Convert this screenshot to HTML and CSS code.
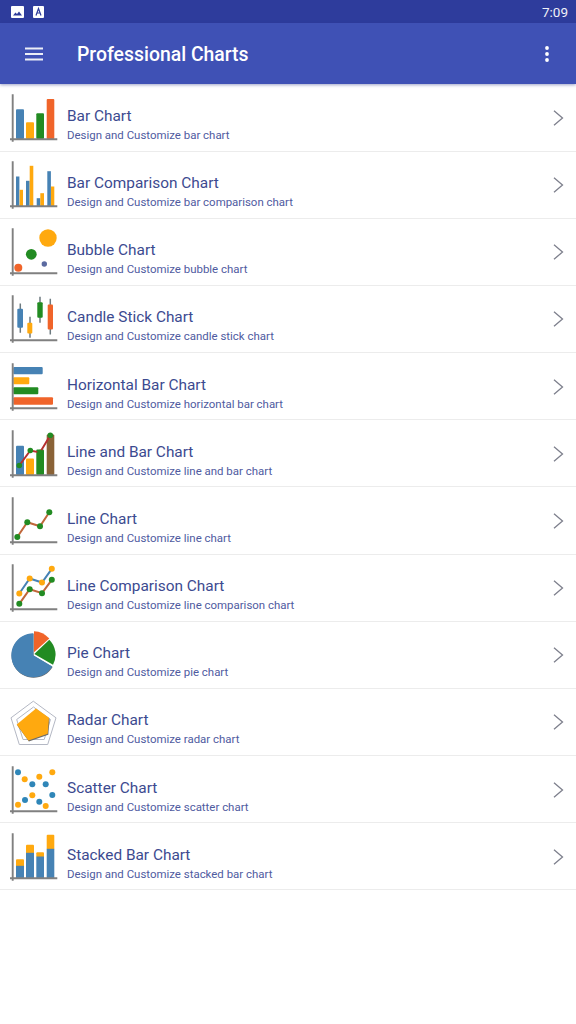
FILE: index.html
```html
<!DOCTYPE html>
<html>
<head>
    <title>Professional Charts</title>
    <link rel="stylesheet" href="styles.css">
</head>
<body>
    <!-- Shared chart axes and chevron -->
    <svg class="defs" width="0" height="0">
        <symbol id="axes" viewBox="0 0 52 56">
            <path d="M4.7 4.3V51.7M2 49.2H49.3" fill="none" stroke="#808080" stroke-width="1.9"/>
        </symbol>
    </svg>

    <!-- Status Bar -->
    <div class="status-bar">
        <div class="status-icons">
            <svg width="13" height="12" viewBox="0 0 13 12"><rect width="13" height="12" rx="1" fill="#fff"/><path d="M2 9.5L4.5 6.5 6 8 8 5.5 11 9.5Z" fill="#2e3c9b"/></svg>
            <svg width="11" height="12" viewBox="0 0 11 12"><rect width="11" height="12" rx="1" fill="#fff"/><path d="M3 9.5L5.5 2.5 8 9.5M4 7H7" fill="none" stroke="#2e3c9b" stroke-width="1.2"/></svg>
        </div>
        <span class="clock">7:09</span>
    </div>

    <!-- Toolbar -->
    <div class="toolbar">
        <svg class="menu-icon" width="18" height="14" viewBox="0 0 18 14"><path d="M0 1.5H18M0 7H18M0 12.5H18" stroke="#fff" stroke-width="1.8" opacity=".9"/></svg>
        <h1>Professional Charts</h1>
        <svg class="more-icon" width="4" height="16" viewBox="0 0 4 16"><circle cx="2" cy="2" r="1.9" fill="#fff"/><circle cx="2" cy="8" r="1.9" fill="#fff"/><circle cx="2" cy="14" r="1.9" fill="#fff"/></svg>
    </div>

    <!-- Chart List -->
    <div class="chart-list">
        <div class="chart-row">
            <svg class="chart-icon" viewBox="0 0 52 56">
                <rect class="blue" x="8" y="19.3" width="8" height="29.7" rx="1"/>
                <rect class="amber" x="18" y="32.3" width="8" height="16.7" rx="1"/>
                <rect class="green" x="28.3" y="23.3" width="7.7" height="25.7" rx="1"/>
                <rect class="red" x="38.7" y="9" width="7.6" height="40" rx="1"/>
                <use href="#axes"/>
            </svg>
            <div class="chart-text">
                <h3>Bar Chart</h3>
                <p>Design and Customize bar chart</p>
            </div>
            <svg class="chevron" width="11" height="16" viewBox="0 0 11 16"><path d="M1 .7L9.5 8 1 15.3" fill="none" stroke="#7d7f8c" stroke-width="1.3"/></svg>
        </div>

        <div class="chart-row">
            <svg class="chart-icon" viewBox="0 0 52 56">
                <rect class="blue" x="8" y="19.5" width="3.4" height="29.5"/>
                <rect class="amber" x="11.6" y="32.8" width="3.4" height="16.2"/>
                <rect class="blue" x="18" y="23.8" width="3.6" height="25.2"/>
                <rect class="amber" x="21.7" y="8.8" width="3.6" height="40.2"/>
                <rect class="blue" x="28.7" y="41.2" width="3.6" height="7.8"/>
                <rect class="amber" x="32.3" y="36.2" width="3.7" height="12.8"/>
                <rect class="blue" x="39.3" y="14.2" width="3.6" height="34.8"/>
                <rect class="amber" x="43" y="29.5" width="3.3" height="19.5"/>
                <use href="#axes"/>
            </svg>
            <div class="chart-text">
                <h3>Bar Comparison Chart</h3>
                <p>Design and Customize bar comparison chart</p>
            </div>
            <svg class="chevron" width="11" height="16" viewBox="0 0 11 16"><path d="M1 .7L9.5 8 1 15.3" fill="none" stroke="#7d7f8c" stroke-width="1.3"/></svg>
        </div>

        <div class="chart-row">
            <svg class="chart-icon" viewBox="0 0 52 56">
                <circle class="amber" cx="40" cy="14" r="8.7"/>
                <circle class="green" cx="23.3" cy="30.3" r="5.4"/>
                <circle class="red" cx="10.3" cy="43.7" r="4"/>
                <circle class="slate" cx="36.3" cy="40" r="2.7"/>
                <use href="#axes"/>
            </svg>
            <div class="chart-text">
                <h3>Bubble Chart</h3>
                <p>Design and Customize bubble chart</p>
            </div>
            <svg class="chevron" width="11" height="16" viewBox="0 0 11 16"><path d="M1 .7L9.5 8 1 15.3" fill="none" stroke="#7d7f8c" stroke-width="1.3"/></svg>
        </div>

        <div class="chart-row">
            <svg class="chart-icon" viewBox="0 0 52 56">
                <path class="wick" d="M12.3 12.5V41.8M22 25.8V46.8M32 5.8V31.8M42.3 7.8V43.5"/>
                <rect class="blue" x="9.3" y="17.8" width="5.7" height="19" rx="1"/>
                <rect class="amber" x="19.3" y="31.8" width="5" height="10.7" rx="1"/>
                <rect class="green" x="29.3" y="11.2" width="5.4" height="15.6" rx="1"/>
                <rect class="red" x="39.7" y="13.5" width="5.3" height="25" rx="1"/>
                <use href="#axes"/>
            </svg>
            <div class="chart-text">
                <h3>Candle Stick Chart</h3>
                <p>Design and Customize candle stick chart</p>
            </div>
            <svg class="chevron" width="11" height="16" viewBox="0 0 11 16"><path d="M1 .7L9.5 8 1 15.3" fill="none" stroke="#7d7f8c" stroke-width="1.3"/></svg>
        </div>

        <div class="chart-row">
            <svg class="chart-icon" viewBox="0 0 52 56">
                <rect class="blue" x="5.3" y="8" width="29.4" height="7.3" rx="1"/>
                <rect class="amber" x="5.3" y="18.3" width="16" height="7" rx="1"/>
                <rect class="green" x="5.3" y="28.3" width="25" height="7" rx="1"/>
                <rect class="red" x="5.3" y="38.3" width="39.7" height="7.4" rx="1"/>
                <use href="#axes"/>
            </svg>
            <div class="chart-text">
                <h3>Horizontal Bar Chart</h3>
                <p>Design and Customize horizontal bar chart</p>
            </div>
            <svg class="chevron" width="11" height="16" viewBox="0 0 11 16"><path d="M1 .7L9.5 8 1 15.3" fill="none" stroke="#7d7f8c" stroke-width="1.3"/></svg>
        </div>

        <div class="chart-row">
            <svg class="chart-icon" viewBox="0 0 52 56">
                <rect class="blue" x="8" y="19.8" width="8" height="29.2" rx="1"/>
                <rect class="amber" x="18" y="32.5" width="8" height="16.5" rx="1"/>
                <rect class="green" x="28.3" y="23.5" width="7.7" height="25.5" rx="1"/>
                <rect class="brown" x="38.7" y="8.5" width="7.6" height="40.5" rx="1"/>
                <path class="line-dark" d="M11.3 39.5L22.3 24.5 32 26.5 42.3 9.2"/>
                <g class="green">
                    <circle cx="11.3" cy="39.5" r="2.8"/><circle cx="22.3" cy="24.5" r="2.8"/>
                    <circle cx="32" cy="26.5" r="2.8"/><circle cx="42.3" cy="9.2" r="2.8"/>
                </g>
                <use href="#axes"/>
            </svg>
            <div class="chart-text">
                <h3>Line and Bar Chart</h3>
                <p>Design and Customize line and bar chart</p>
            </div>
            <svg class="chevron" width="11" height="16" viewBox="0 0 11 16"><path d="M1 .7L9.5 8 1 15.3" fill="none" stroke="#7d7f8c" stroke-width="1.3"/></svg>
        </div>

        <div class="chart-row">
            <svg class="chart-icon" viewBox="0 0 52 56">
                <path class="line-red" d="M9.3 44L19.3 29.3 32 33.3 41.3 19.3"/>
                <g class="green">
                    <circle cx="9.3" cy="44" r="3"/><circle cx="19.3" cy="29.3" r="3"/>
                    <circle cx="32" cy="33.3" r="3"/><circle cx="41.3" cy="19.3" r="3"/>
                </g>
                <use href="#axes"/>
            </svg>
            <div class="chart-text">
                <h3>Line Chart</h3>
                <p>Design and Customize line chart</p>
            </div>
            <svg class="chevron" width="11" height="16" viewBox="0 0 11 16"><path d="M1 .7L9.5 8 1 15.3" fill="none" stroke="#7d7f8c" stroke-width="1.3"/></svg>
        </div>

        <div class="chart-row">
            <svg class="chart-icon" viewBox="0 0 52 56">
                <path class="line-blue" d="M11.3 33.5L21.7 18.5 34 22.5 43.8 8.8"/>
                <g class="amber">
                    <circle cx="11.3" cy="33.5" r="3"/><circle cx="21.7" cy="18.5" r="3"/>
                    <circle cx="34" cy="22.5" r="3"/><circle cx="43.8" cy="8.8" r="3"/>
                </g>
                <path class="line-red" d="M11.3 43.8L21.7 29.2 34 33.2 43.8 19.8"/>
                <g class="green">
                    <circle cx="11.3" cy="43.8" r="3"/><circle cx="21.7" cy="29.2" r="3"/>
                    <circle cx="34" cy="33.2" r="3"/><circle cx="43.8" cy="19.8" r="3"/>
                </g>
                <use href="#axes"/>
            </svg>
            <div class="chart-text">
                <h3>Line Comparison Chart</h3>
                <p>Design and Customize line comparison chart</p>
            </div>
            <svg class="chevron" width="11" height="16" viewBox="0 0 11 16"><path d="M1 .7L9.5 8 1 15.3" fill="none" stroke="#7d7f8c" stroke-width="1.3"/></svg>
        </div>

        <div class="chart-row">
            <svg class="chart-icon" viewBox="0 0 52 56">
                <path class="shade" d="M25.6 28.8V6.8A22 22 0 1 0 44.6 39.9Z"/>
                <path class="blue" d="M25.3 28.3V6.3A22 22 0 1 0 44.3 39.4Z"/>
                <path class="green" d="M26.3 27L41.3 12.7A21 21 0 0 1 45 37.7Z"/>
                <path class="red" d="M26 25.3V4.3A22 22 0 0 1 41.3 11.5Z"/>
            </svg>
            <div class="chart-text">
                <h3>Pie Chart</h3>
                <p>Design and Customize pie chart</p>
            </div>
            <svg class="chevron" width="11" height="16" viewBox="0 0 11 16"><path d="M1 .7L9.5 8 1 15.3" fill="none" stroke="#7d7f8c" stroke-width="1.3"/></svg>
        </div>

        <div class="chart-row">
            <svg class="chart-icon" viewBox="0 0 52 56">
                <path class="web" d="M25.3 7.2L48 23.8 39.7 50.5H11.3L3 23.8Z"/>
                <path class="web" d="M25.5 13L42.5 25.5 36.2 45.5H15L8.7 25.5Z"/>
                <path class="shade" d="M28 15.5L41.6 24.8 40.3 40.8 20.9 47.5 9.3 31.5Z"/>
                <path class="amber" d="M28 14.5L41 23.8 39.7 39.8 20.3 46.5 8.7 30.5Z"/>
            </svg>
            <div class="chart-text">
                <h3>Radar Chart</h3>
                <p>Design and Customize radar chart</p>
            </div>
            <svg class="chevron" width="11" height="16" viewBox="0 0 11 16"><path d="M1 .7L9.5 8 1 15.3" fill="none" stroke="#7d7f8c" stroke-width="1.3"/></svg>
        </div>

        <div class="chart-row">
            <svg class="chart-icon" viewBox="0 0 52 56">
                <g class="teal">
                    <circle cx="10" cy="10.3" r="3"/><circle cx="24.3" cy="22.3" r="3"/>
                    <circle cx="37.7" cy="22.3" r="3"/><circle cx="17" cy="38" r="3"/>
                    <circle cx="31.3" cy="39.7" r="3"/><circle cx="44.3" cy="33" r="3"/>
                </g>
                <g class="amber">
                    <circle cx="16.7" cy="17.3" r="3"/><circle cx="31.3" cy="14.7" r="3"/>
                    <circle cx="44.3" cy="10.3" r="3"/><circle cx="24.3" cy="33.3" r="3"/>
                    <circle cx="10" cy="42.7" r="3"/><circle cx="37.7" cy="44" r="3"/>
                </g>
                <use href="#axes"/>
            </svg>
            <div class="chart-text">
                <h3>Scatter Chart</h3>
                <p>Design and Customize scatter chart</p>
            </div>
            <svg class="chevron" width="11" height="16" viewBox="0 0 11 16"><path d="M1 .7L9.5 8 1 15.3" fill="none" stroke="#7d7f8c" stroke-width="1.3"/></svg>
        </div>

        <div class="chart-row">
            <svg class="chart-icon" viewBox="0 0 52 56">
                <rect class="amber" x="8" y="30.2" width="8" height="8" rx="1"/>
                <rect class="blue" x="8" y="36.8" width="8" height="12.2"/>
                <rect class="amber" x="18" y="15.8" width="8" height="9" rx="1"/>
                <rect class="blue" x="18" y="23.8" width="8" height="25.2"/>
                <rect class="amber" x="28.3" y="23.2" width="7.7" height="5" rx="1"/>
                <rect class="blue" x="28.3" y="27.5" width="7.7" height="21.5"/>
                <rect class="amber" x="38.7" y="5.8" width="7.6" height="15" rx="1"/>
                <rect class="blue" x="38.7" y="19.8" width="7.6" height="29.2"/>
                <use href="#axes"/>
            </svg>
            <div class="chart-text">
                <h3>Stacked Bar Chart</h3>
                <p>Design and Customize stacked bar chart</p>
            </div>
            <svg class="chevron" width="11" height="16" viewBox="0 0 11 16"><path d="M1 .7L9.5 8 1 15.3" fill="none" stroke="#7d7f8c" stroke-width="1.3"/></svg>
        </div>
    </div>
</body>
</html>
```

FILE: styles.css
```css
/* General Styles */
body {
    font-family: Roboto, Arial, sans-serif;
    margin: 0;
    padding: 0;
    background: #fff;
}

.defs {
    display: block;
    height: 0;
}

/* Status Bar */
.status-bar {
    height: 23px;
    background: #2e3c9c;
    color: #f0f1f8;
    display: flex;
    align-items: center;
    justify-content: space-between;
    padding: 0 8px 0 11px;
}

.status-icons {
    display: flex;
    gap: 9px;
}

.clock {
    font-size: 13.5px;
}

/* Toolbar */
.toolbar {
    height: 61px;
    background: #3f51b5;
    color: white;
    display: flex;
    align-items: center;
    padding: 0 27px 0 25px;
    box-shadow: 0 1px 3px rgba(40, 50, 130, 0.45);
    position: relative;
}

.toolbar h1 {
    flex: 1;
    margin: 2px 0 0 34px;
    font-size: 19.4px;
    font-weight: 500;
}

/* Chart List */
.chart-list {
    padding-top: 0.5px;
}

.chart-row {
    height: 67.17px;
    box-sizing: border-box;
    border-bottom: 1px solid #ececec;
    display: flex;
    align-items: flex-start;
    padding-left: 8px;
}

.chart-icon {
    width: 52px;
    height: 56px;
    margin-top: 5.5px;
    flex: none;
}

.chart-icon use {
    width: 52px;
    height: 56px;
}

.chart-text {
    flex: 1;
    margin-left: 7px;
    padding-top: 21.5px;
}

.chart-text h3 {
    margin: 0;
    font-size: 15.4px;
    line-height: 20px;
    font-weight: 400;
    color: #3c4a90;
}

.chart-text p {
    margin: 0;
    font-size: 11.45px;
    line-height: 18px;
    color: #4f5b9f;
}

.chevron {
    margin: 25.5px 12px 0 0;
    flex: none;
}

/* Chart Colours */
.blue { fill: #4682b4; }
.amber { fill: #ffa90f; }
.green { fill: #228b22; }
.red { fill: #f0642a; }
.brown { fill: #8a6236; }
.slate { fill: #5b6aa0; }
.teal { fill: #2f86b8; }
.shade { fill: #6b6b6b; }

.wick {
    fill: none;
    stroke: #6d7a80;
    stroke-width: 1.5;
}

.line-red {
    fill: none;
    stroke: #c0673a;
    stroke-width: 2;
}

.line-dark {
    fill: none;
    stroke: #b5302e;
    stroke-width: 2;
}

.line-blue {
    fill: none;
    stroke: #4682b4;
    stroke-width: 2;
}

.web {
    fill: none;
    stroke: #b4b8c4;
    stroke-width: 1;
}
```
